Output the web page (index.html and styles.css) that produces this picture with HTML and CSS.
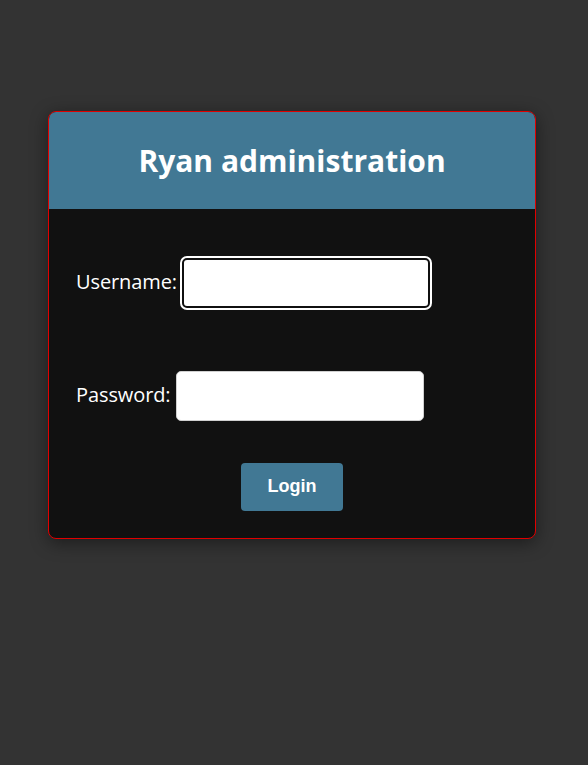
FILE: index.html
```html
<!DOCTYPE html>
<html lang="en">
<head>
<meta charset="utf-8">
<title>Ryan administration</title>
<link rel="stylesheet" href="styles.css">
</head>
<body>
  <div class="card">
    <div class="card-header">
      <h1 class="title">Ryan administration</h1>
    </div>
    <form class="card-body">
      <div class="row">
        <label class="label" for="username">Username:</label>
        <input class="field field-focus" id="username" type="text">
      </div>
      <div class="row row-second">
        <label class="label" for="password">Password:</label>
        <input class="field" id="password" type="password">
      </div>
      <div class="actions">
        <button class="btn" type="button">Login</button>
      </div>
    </form>
  </div>
</body>
</html>
```
FILE: styles.css
```css
html, body {
  margin: 0;
  padding: 0;
  background: #333333;
  height: 100%;
}
body {
  font-family: "Open Sans", "Noto Sans", sans-serif;
  color: #ffffff;
  padding-top: 111px;
  padding-left: 48px;
  box-sizing: border-box;
}
.card {
  width: 488px;
  box-sizing: border-box;
  border: 1px solid #e00000;
  border-radius: 8px;
  overflow: hidden;
  background: #111111;
  box-shadow: 0 4px 18px rgba(0, 0, 0, 0.45);
}
.card-header {
  height: 97px;
  background: #417894;
  display: flex;
  align-items: center;
  justify-content: center;
}
.title {
  margin: 0;
  font-size: 30px;
  font-weight: 700;
  letter-spacing: 0;
  color: #ffffff;
  line-height: 1;
}
.card-body {
  margin: 0;
  padding: 49px 27px 27px 27px;
  display: flex;
  flex-direction: column;
}
.row {
  display: flex;
  align-items: center;
  height: 50px;
}
.row-second {
  margin-top: 63px;
}
.label {
  font-size: 20px;
  color: #ffffff;
  margin-right: 5px;
  margin-bottom: 4px;
  letter-spacing: -0.1px;
}
.field {
  width: 248px;
  height: 50px;
  box-sizing: border-box;
  border: 1px solid #d0d0d0;
  border-radius: 5px;
  background: #ffffff;
  padding: 0 10px;
  font-size: 16px;
  margin: 0;
}
.field-focus {
  border: 2px solid #101010;
  outline: 2px solid #ffffff;
  outline-offset: 0;
}
.field:focus {
  outline: 2px solid #ffffff;
}
.actions {
  margin-top: 42px;
  display: flex;
  justify-content: center;
}
.btn {
  width: 102px;
  height: 48px;
  border: none;
  border-radius: 4px;
  background: #417894;
  color: #ffffff;
  font-family: "Liberation Sans", Arial, sans-serif;
  font-size: 18px;
  font-weight: 700;
  padding: 0 0 2px 0;
  cursor: pointer;
}
```
